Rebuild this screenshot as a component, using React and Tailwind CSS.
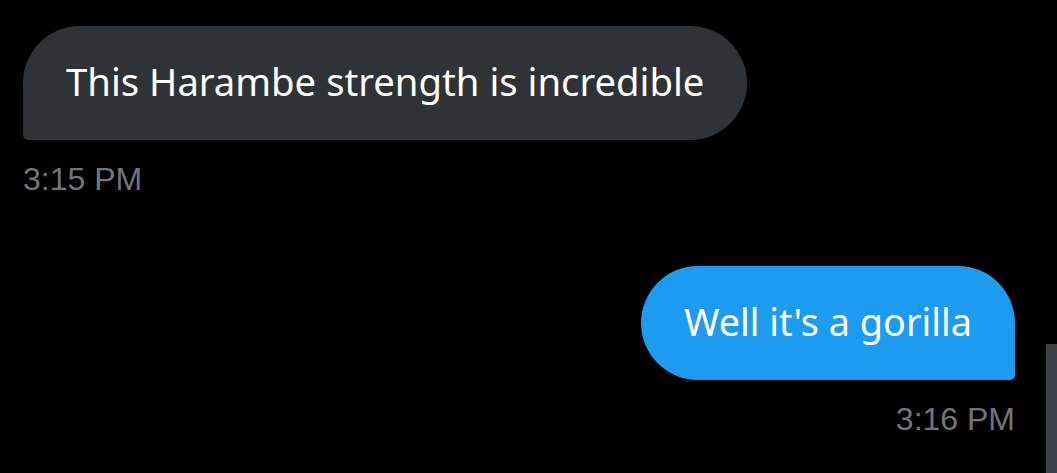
import React from "react";

const messages = [
  { id: 1, text: "This Harambe strength is incredible", time: "3:15 PM", mine: false },
  { id: 2, text: "Well it's a gorilla", time: "3:16 PM", mine: true },
];

function Bubble({ msg }) {
  return (
    <div className={`flex flex-col ${msg.mine ? "items-end" : "items-start"}`}>
      <div
        className={`h-[114px] flex items-center px-[43px] text-white font-['Noto_Sans',sans-serif] leading-none ${
          msg.mine
            ? "bg-[#1d9bf0] rounded-[57px] rounded-br-[5px] text-[37.8px]"
            : "bg-[#2f3336] rounded-[57px] rounded-bl-[5px] text-[38.25px]"
        }`}
      >
        <span className="-mt-[3px]">{msg.text}</span>
      </div>
      <div className="mt-[23px] text-[32px] leading-none text-[#71767b] font-['Liberation_Sans',Arial,sans-serif]">
        {msg.time}
      </div>
    </div>
  );
}

export default function App() {
  return (
    <div className="relative w-[1057px] h-[473px] bg-black overflow-hidden">
      <div className="flex flex-col gap-[71px] pl-[23px] pr-[42px] pt-[26px]">
        {messages.map((m) => (
          <Bubble key={m.id} msg={m} />
        ))}
      </div>
      {/* scrollbar thumb */}
      <div className="absolute right-0 top-[344px] w-[11px] h-[129px] bg-[#3e4144]" />
    </div>
  );
}
